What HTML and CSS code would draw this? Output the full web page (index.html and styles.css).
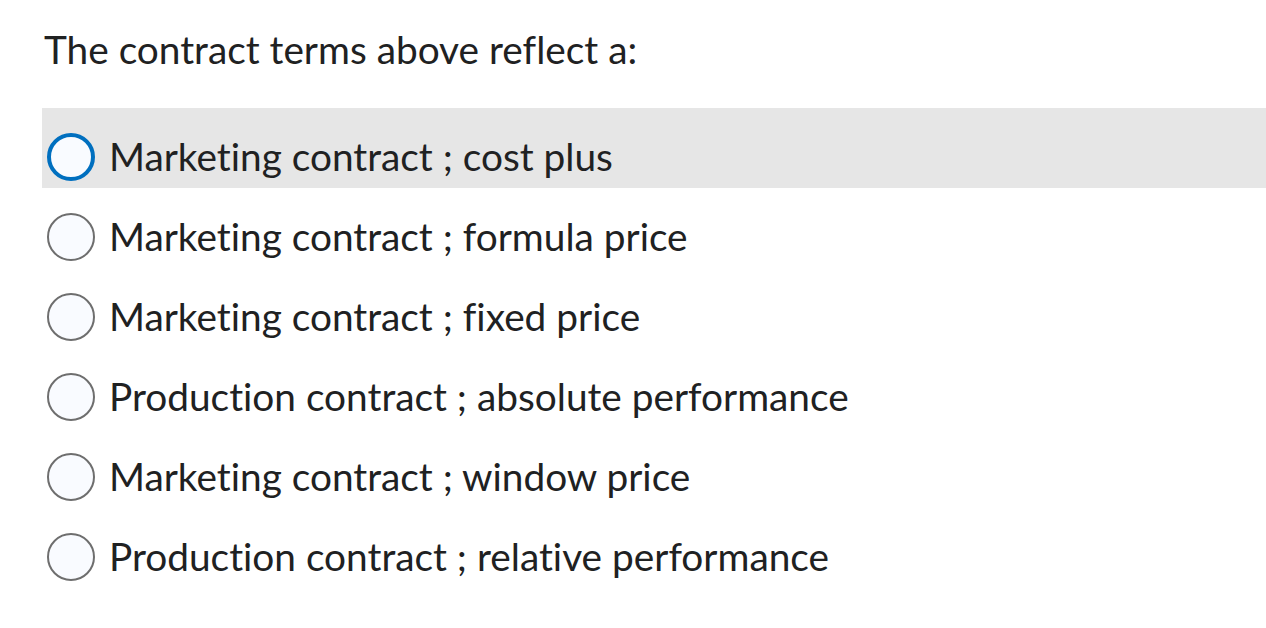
FILE: index.html
```html
<!DOCTYPE html>
<html>
<head>
<meta charset="utf-8">
<link rel="stylesheet" href="styles.css">
</head>
<body>
<div class="page">
  <h1 class="question">The contract terms above reflect a:</h1>
  <div class="options">
    <label class="option focused"><span class="radio"></span><span class="label">Marketing contract ; cost plus</span></label>
    <label class="option"><span class="radio"></span><span class="label">Marketing contract ; formula price</span></label>
    <label class="option"><span class="radio"></span><span class="label">Marketing contract ; fixed price</span></label>
    <label class="option"><span class="radio"></span><span class="label">Production contract ; absolute performance</span></label>
    <label class="option"><span class="radio"></span><span class="label">Marketing contract ; window price</span></label>
    <label class="option"><span class="radio"></span><span class="label">Production contract ; relative performance</span></label>
  </div>
</div>
</body>
</html>
```
FILE: styles.css
```css
html, body {
  margin: 0;
  padding: 0;
  background: #ffffff;
}
.page {
  font-family: Lato, "Liberation Sans", sans-serif;
  font-variant-ligatures: none;
  color: #202122;
  padding-left: 42px;
}
.question {
  margin: 0;
  padding-top: 24px;
  padding-left: 2px;
  height: 108px;
  box-sizing: border-box;
  font-size: 38.8px;
  font-weight: 400;
  line-height: 50px;
}
.options {
  display: flex;
  flex-direction: column;
}
.option {
  display: flex;
  align-items: center;
  height: 80px;
  box-sizing: border-box;
  padding-top: 16px;
  padding-left: 5px;
  gap: 14px;
}
.option.focused {
  background: #e6e6e6;
}
.radio {
  width: 48px;
  height: 48px;
  box-sizing: border-box;
  border-radius: 50%;
  border: 2.5px solid #6e6e6e;
  background: #f9fbff;
  flex: none;
  margin-top: 2px;
}
.focused .radio {
  border: 4px solid #006fbf;
}
.label {
  font-size: 38.8px;
  line-height: 44px;
}
```
